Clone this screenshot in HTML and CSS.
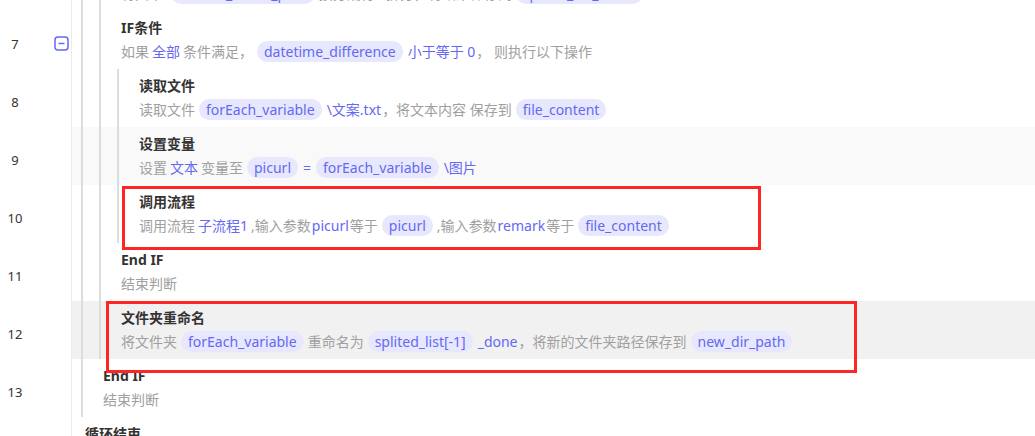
FILE: index.html
```html
<!DOCTYPE html>
<html lang="zh-CN">
<head>
    <meta charset="UTF-8">
    <meta name="viewport" content="width=device-width, initial-scale=1.0">
    <title>流程编辑</title>
    <link rel="stylesheet" href="styles.css">
</head>
<body>
    <div class="page">
        <div class="flow">
            <div class="row">
                <div class="ln"><span class="num">6</span></div>
                <div class="cell">
                    <span class="guide"></span><span class="guide"></span>
                    <div class="step">
                        <div class="title">拆分文本</div>
                        <div class="desc">将文本 <span class="chip">current_folder_path</span>按分隔符<span class="kw">\</span>拆分，将结果保存到<span class="chip">splited_list_result</span></div>
                    </div>
                </div>
            </div>

            <div class="row">
                <div class="ln">
                    <span class="num">7</span>
                    <span class="fold">
                        <svg width="15" height="15" viewBox="0 0 15 15"><rect x="1" y="1" width="13" height="13" rx="3" fill="none" stroke="#6568f2" stroke-width="1.5"/><path d="M4.5 7.5h6" stroke="#6568f2" stroke-width="1.5"/></svg>
                    </span>
                </div>
                <div class="cell">
                    <span class="guide"></span><span class="guide"></span>
                    <div class="step">
                        <div class="title">IF条件</div>
                        <div class="desc">如果<span class="kw">全部</span>条件满足，<span class="chip">datetime_difference</span><span class="kw tight">小于等于 0</span>，&nbsp;则执行以下操作</div>
                    </div>
                </div>
            </div>

            <div class="row">
                <div class="ln"><span class="num">8</span></div>
                <div class="cell">
                    <span class="guide"></span><span class="guide"></span><span class="guide"></span>
                    <div class="step">
                        <div class="title">读取文件</div>
                        <div class="desc">读取文件<span class="chip">forEach_variable</span><span class="kw tight">\文案.txt</span>，将文本内容 保存到<span class="chip">file_content</span></div>
                    </div>
                </div>
            </div>

            <div class="row alt">
                <div class="ln"><span class="num">9</span></div>
                <div class="cell">
                    <span class="guide"></span><span class="guide"></span><span class="guide"></span>
                    <div class="step">
                        <div class="title">设置变量</div>
                        <div class="desc">设置<span class="kw">文本</span>变量至<span class="chip">picurl</span><span class="kw tight">=</span><span class="chip">forEach_variable</span><span class="kw tight">\图片</span></div>
                    </div>
                </div>
            </div>

            <div class="row">
                <div class="ln"><span class="num">10</span></div>
                <div class="cell">
                    <span class="guide"></span><span class="guide"></span><span class="guide"></span>
                    <div class="step">
                        <div class="title">调用流程</div>
                        <div class="desc">调用流程<span class="kw">子流程1</span>,输入参数<span class="kw tight">picurl</span>等于<span class="chip">picurl</span>,输入参数<span class="kw tight">remark</span>等于<span class="chip">file_content</span></div>
                    </div>
                </div>
            </div>

            <div class="row">
                <div class="ln"><span class="num">11</span></div>
                <div class="cell">
                    <span class="guide"></span><span class="guide"></span>
                    <div class="step">
                        <div class="title">End IF</div>
                        <div class="desc">结束判断</div>
                    </div>
                </div>
            </div>

            <div class="row hover">
                <div class="ln"><span class="num">12</span></div>
                <div class="cell">
                    <span class="guide"></span><span class="guide"></span>
                    <div class="step">
                        <div class="title">文件夹重命名</div>
                        <div class="desc">将文件夹<span class="chip">forEach_variable</span>重命名为<span class="chip">splited_list[-1]</span><span class="kw tight">_done</span>，将新的文件夹路径保存到<span class="chip">new_dir_path</span></div>
                    </div>
                </div>
            </div>

            <div class="row">
                <div class="ln"><span class="num">13</span></div>
                <div class="cell">
                    <span class="guide"></span>
                    <div class="step">
                        <div class="title">End IF</div>
                        <div class="desc">结束判断</div>
                    </div>
                </div>
            </div>

            <div class="row">
                <div class="ln"><span class="num">14</span></div>
                <div class="cell">
                    <div class="step">
                        <div class="title">循环结束</div>
                        <div class="desc">结束循环</div>
                    </div>
                </div>
            </div>
        </div>

        <div class="mark mark-call"></div>
        <div class="mark mark-rename"></div>
    </div>
</body>
</html>
```

FILE: styles.css
```css
body {
    margin: 0;
    font-family: "Noto Sans", "Noto Sans CJK SC", sans-serif;
    font-size: 14px;
    color: #333;
    background: #fff;
}
.page {
    position: relative;
    height: 436px;
    overflow: hidden;
}
.flow {
    margin-top: -47px;
}
.row {
    display: flex;
    height: 58px;
}
.ln {
    width: 72px;
    flex: none;
    display: flex;
    align-items: flex-start;
    padding-top: 24px;
    box-sizing: border-box;
    border-right: 1px solid #ebebeb;
    font-size: 13px;
    line-height: 18px;
    color: #333;
}
.num {
    width: 30px;
    text-align: center;
}
.fold {
    margin-left: 24px;
    margin-top: 1px;
    height: 15px;
}
.fold svg {
    display: block;
}
.cell {
    flex: 1;
    display: flex;
    padding-left: 9px;
}
.row.alt .cell {
    background: #f9f9f9;
}
.row.hover .cell {
    background: #f1f1f1;
}
.guide {
    width: 18px;
    flex: none;
    box-sizing: border-box;
    border-left: 2px solid #dcdcdc;
}
.step {
    margin-left: 4px;
    padding-top: 7px;
    white-space: nowrap;
}
.title {
    font-weight: bold;
    line-height: 20px;
    color: #333;
}
.desc {
    margin-top: 2px;
    line-height: 24px;
    color: #a0a0a0;
}
.kw {
    color: #6568f2;
    margin: 0 3px;
}
.kw.tight {
    margin: 0 1px;
}
.chip {
    display: inline-block;
    line-height: 21px;
    padding: 0 7px;
    margin: 0 4px;
    border-radius: 11px;
    background: #e7e8fd;
    color: #6568f2;
}
.mark {
    position: absolute;
    box-sizing: border-box;
    border: 3px solid #ff2525;
}
.mark-call {
    left: 122px;
    top: 186px;
    width: 639px;
    height: 64px;
}
.mark-rename {
    left: 106px;
    top: 301px;
    width: 751px;
    height: 72px;
}
```
